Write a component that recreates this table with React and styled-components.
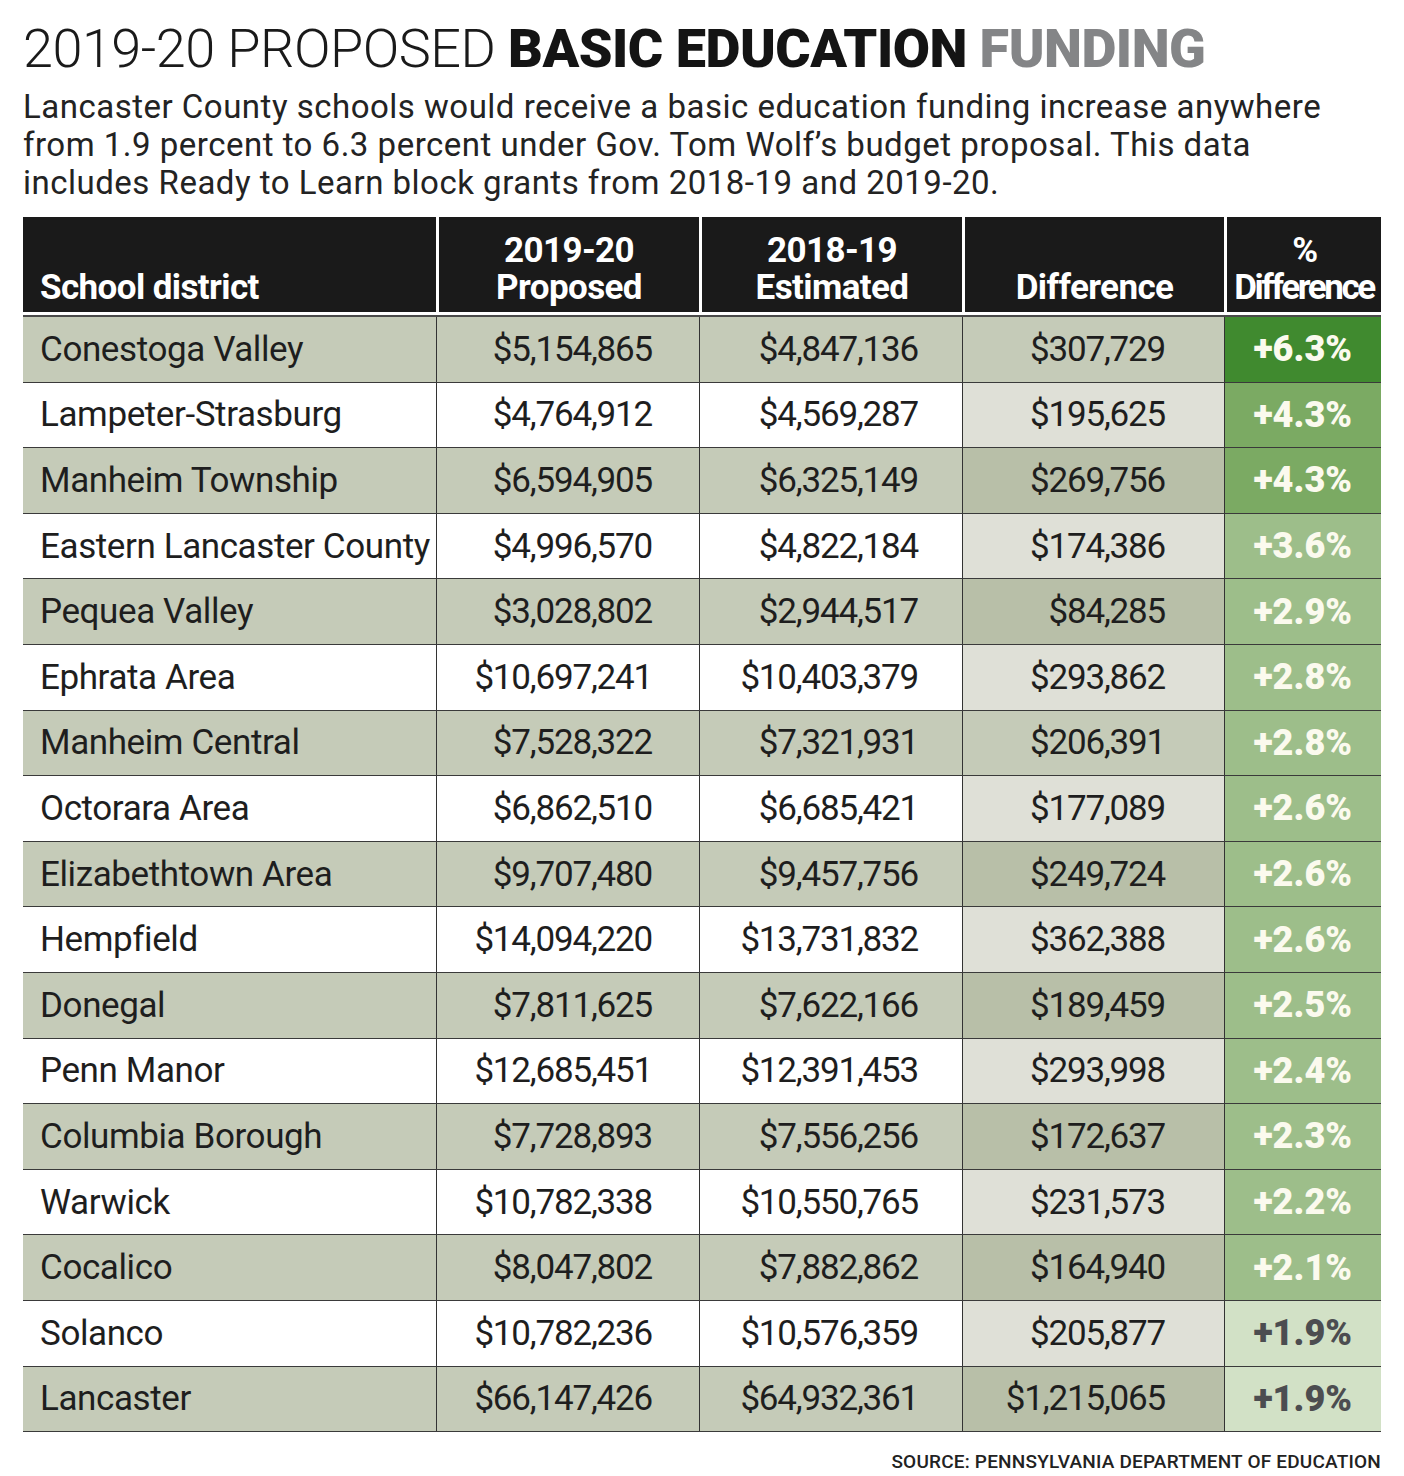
import React from "react";
import styled, { createGlobalStyle } from "styled-components";

const GlobalStyle = createGlobalStyle`
  body {
    margin: 0;
    background: #ffffff;
    font-family: Roboto, "Liberation Sans", sans-serif;
    color: #1f1f1f;
  }
`;

const COLS = "413px 263px 263px 262px 157px";

const Page = styled.div`
  width: 1404px;
  padding: 22px 23px 0 23px;
  box-sizing: border-box;
`;

const Title = styled.h1`
  margin: 0;
  font-size: 54px;
  line-height: 54px;
  font-weight: 300;
  color: #1a1a1a;
  letter-spacing: -0.5px;
  white-space: nowrap;
`;

const Strong = styled.span`
  font-weight: 900;
  color: ${({ $grey }) => ($grey ? "#848587" : "#141414")};
`;

const Intro = styled.p`
  margin: 12px 0 0 0;
  font-size: 33px;
  line-height: 38px;
  font-weight: 400;
  color: #232323;
  letter-spacing: 0.5px;
  white-space: nowrap;
`;

const Table = styled.div`
  margin-top: 15px;
  width: 1358px;
`;

const HeadRow = styled.div`
  display: grid;
  grid-template-columns: ${COLS};
  height: 95px;
  background: #1a1a1a;
  border-bottom: 3px solid #ffffff;
`;

const HeadCell = styled.div`
  display: flex;
  flex-direction: column;
  justify-content: flex-end;
  align-items: ${({ $left }) => ($left ? "flex-start" : "center")};
  padding: 0 0 6px ${({ $left }) => ($left ? "17px" : "0")};
  border-left: ${({ $left }) => ($left ? "none" : "3px solid #ffffff")};
  color: #ffffff;
  font-weight: 700;
  font-size: 35px;
  line-height: 37px;
  letter-spacing: ${({ $tight }) => ($tight ? "-2.4px" : "-0.6px")};
  text-align: center;
  white-space: nowrap;
`;

const Body = styled.div`
  border-top: 2px solid #4a4a4a;
`;

const Row = styled.div`
  display: grid;
  grid-template-columns: ${COLS};
  height: 65.6px;
  box-sizing: border-box;
  border-bottom: 1.6px solid #3a3a3a;
  background: ${({ $shade }) => ($shade ? "#c5cbb8" : "#ffffff")};
`;

const NameCell = styled.div`
  display: flex;
  align-items: center;
  padding-left: 17px;
  font-size: 35px;
  font-weight: 400;
  color: #1e1e1e;
  letter-spacing: -0.4px;
  white-space: nowrap;
`;

const NumCell = styled.div`
  display: flex;
  align-items: center;
  justify-content: flex-end;
  padding-right: ${({ $pad }) => $pad}px;
  border-left: 1.5px solid #333333;
  background: ${({ $bg }) => $bg || "transparent"};
  font-size: 35px;
  font-weight: 400;
  color: #1e1e1e;
  letter-spacing: -1.2px;
`;

const PctCell = styled.div`
  display: flex;
  align-items: center;
  justify-content: flex-end;
  padding-right: 29px;
  border-left: 1.5px solid #333333;
  background: ${({ $bg }) => $bg};
  color: ${({ $fg }) => $fg};
  font-size: 36px;
  font-weight: 900;
  letter-spacing: 0;
`;

const Source = styled.div`
  width: 1358px;
  text-align: right;
  margin-top: 18px;
  font-size: 19px;
  font-weight: 500;
  letter-spacing: 0.2px;
  color: #222222;
`;

const rows = [
  ["Conestoga Valley", "$5,154,865", "$4,847,136", "$307,729", "+6.3%"],
  ["Lampeter-Strasburg", "$4,764,912", "$4,569,287", "$195,625", "+4.3%"],
  ["Manheim Township", "$6,594,905", "$6,325,149", "$269,756", "+4.3%"],
  ["Eastern Lancaster County", "$4,996,570", "$4,822,184", "$174,386", "+3.6%"],
  ["Pequea Valley", "$3,028,802", "$2,944,517", "$84,285", "+2.9%"],
  ["Ephrata Area", "$10,697,241", "$10,403,379", "$293,862", "+2.8%"],
  ["Manheim Central", "$7,528,322", "$7,321,931", "$206,391", "+2.8%"],
  ["Octorara Area", "$6,862,510", "$6,685,421", "$177,089", "+2.6%"],
  ["Elizabethtown Area", "$9,707,480", "$9,457,756", "$249,724", "+2.6%"],
  ["Hempfield", "$14,094,220", "$13,731,832", "$362,388", "+2.6%"],
  ["Donegal", "$7,811,625", "$7,622,166", "$189,459", "+2.5%"],
  ["Penn Manor", "$12,685,451", "$12,391,453", "$293,998", "+2.4%"],
  ["Columbia Borough", "$7,728,893", "$7,556,256", "$172,637", "+2.3%"],
  ["Warwick", "$10,782,338", "$10,550,765", "$231,573", "+2.2%"],
  ["Cocalico", "$8,047,802", "$7,882,862", "$164,940", "+2.1%"],
  ["Solanco", "$10,782,236", "$10,576,359", "$205,877", "+1.9%"],
  ["Lancaster", "$66,147,426", "$64,932,361", "$1,215,065", "+1.9%"],
];

// difference column shade, per row
const diffBg = (i) => {
  if (i % 2 === 1) return "#dfe0d7";
  if (i === 0 || i === 6) return "#c5cbb8";
  return "#b8bfa8";
};

const pctColors = (pct) => {
  const v = parseFloat(pct);
  if (v >= 6) return ["#408a2f", "#fbfaee"];
  if (v >= 4) return ["#7baa63", "#fbfaee"];
  if (v >= 2) return ["#9dbe8a", "#fbfaee"];
  return ["#d2e1c6", "#4c4d50"];
};

const App = () => {
  return (
    <>
      <GlobalStyle />
      <Page>
        <Title>
          2019-20 PROPOSED <Strong>BASIC EDUCATION</Strong>{" "}
          <Strong $grey>FUNDING</Strong>
        </Title>
        <Intro>
          Lancaster County schools would receive a basic education funding increase anywhere
          <br />
          from 1.9 percent to 6.3 percent under Gov. Tom Wolf’s budget proposal. This data
          <br />
          includes Ready to Learn block grants from 2018-19 and 2019-20.
        </Intro>
        <Table>
          <HeadRow>
            <HeadCell $left>School district</HeadCell>
            <HeadCell>
              <span>2019-20</span>
              <span>Proposed</span>
            </HeadCell>
            <HeadCell>
              <span>2018-19</span>
              <span>Estimated</span>
            </HeadCell>
            <HeadCell>Difference</HeadCell>
            <HeadCell $tight>
              <span>%</span>
              <span>Difference</span>
            </HeadCell>
          </HeadRow>
          <Body>
            {rows.map((r, i) => {
              const [bg, fg] = pctColors(r[4]);
              return (
                <Row key={r[0]} $shade={i % 2 === 0}>
                  <NameCell>{r[0]}</NameCell>
                  <NumCell $pad={47}>{r[1]}</NumCell>
                  <NumCell $pad={44}>{r[2]}</NumCell>
                  <NumCell $pad={59} $bg={diffBg(i)}>
                    {r[3]}
                  </NumCell>
                  <PctCell $bg={bg} $fg={fg}>
                    {r[4]}
                  </PctCell>
                </Row>
              );
            })}
          </Body>
        </Table>
        <Source>SOURCE: PENNSYLVANIA DEPARTMENT OF EDUCATION</Source>
      </Page>
    </>
  );
};

export default App;
